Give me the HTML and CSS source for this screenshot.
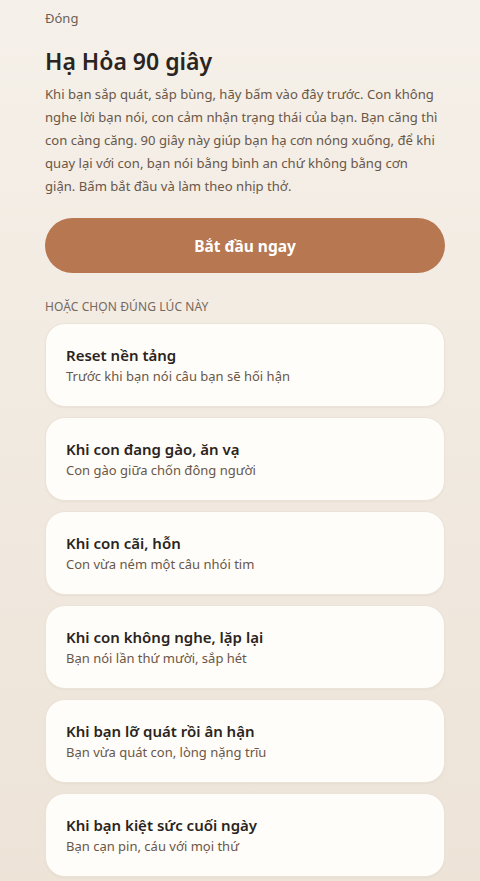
FILE: index.html
```html
<!DOCTYPE html>
<html lang="vi">
<head>
<meta charset="utf-8">
<title>Hạ Hỏa 90 giây</title>
<link rel="stylesheet" href="styles.css">
</head>
<body>
<main class="page">
  <a class="close" href="#">Đóng</a>
  <h1 class="title">Hạ Hỏa 90 giây</h1>
  <p class="intro">Khi bạn sắp quát, sắp bùng, hãy bấm vào đây trước. Con không nghe lời bạn nói, con cảm nhận trạng thái của bạn. Bạn căng thì con càng căng. 90 giây này giúp bạn hạ cơn nóng xuống, để khi quay lại với con, bạn nói bằng bình an chứ không bằng cơn giận. Bấm bắt đầu và làm theo nhịp thở.</p>
  <button class="start">Bắt đầu ngay</button>
  <h2 class="section">Hoặc chọn đúng lúc này</h2>
  <ul class="list">
    <li class="card"><div class="card-title">Reset nền tảng</div><div class="card-sub">Trước khi bạn nói câu bạn sẽ hối hận</div></li>
    <li class="card"><div class="card-title">Khi con đang gào, ăn vạ</div><div class="card-sub">Con gào giữa chốn đông người</div></li>
    <li class="card"><div class="card-title">Khi con cãi, hỗn</div><div class="card-sub">Con vừa ném một câu nhói tim</div></li>
    <li class="card"><div class="card-title">Khi con không nghe, lặp lại</div><div class="card-sub">Bạn nói lần thứ mười, sắp hét</div></li>
    <li class="card"><div class="card-title">Khi bạn lỡ quát rồi ân hận</div><div class="card-sub">Bạn vừa quát con, lòng nặng trĩu</div></li>
    <li class="card"><div class="card-title">Khi bạn kiệt sức cuối ngày</div><div class="card-sub">Bạn cạn pin, cáu với mọi thứ</div></li>
  </ul>
</main>
</body>
</html>
```
FILE: styles.css
```css
html, body {
  margin: 0;
  padding: 0;
}
body {
  min-height: 100vh;
  background: linear-gradient(180deg, #f5f0e9 0%, #ede3d7 100%);
  font-family: "Noto Sans", "Open Sans", sans-serif;
  color: #2b2520;
}
.page {
  padding: 8px 35px 40px 45px;
  display: flex;
  flex-direction: column;
}
.close {
  font-size: 13px;
  line-height: 20px;
  color: #6b5f56;
  text-decoration: none;
  align-self: flex-start;
}
.title {
  margin: 18px 0 0;
  font-size: 23px;
  line-height: 30px;
  font-weight: 600;
  color: #2a2420;
}
.intro {
  margin: 7px 0 0;
  max-width: 393px;
  font-size: 13.1px;
  line-height: 23px;
  color: #6a5748;
}
.start {
  margin-top: 20px;
  height: 55px;
  border: none;
  border-radius: 28px;
  background: #b77750;
  color: #fff;
  font-family: inherit;
  font-size: 15.5px;
  font-weight: 700;
}
.section {
  margin: 24px 0 0;
  font-size: 12px;
  line-height: 20px;
  font-weight: 400;
  text-transform: uppercase;
  color: #76685c;
  letter-spacing: 0.1px;
}
.list {
  list-style: none;
  margin: 6px 0 0;
  padding: 0;
  display: flex;
  flex-direction: column;
  gap: 10px;
}
.card {
  height: 84px;
  box-sizing: border-box;
  padding: 20px;
  background: #fffdf9;
  border: 1px solid #ebe3d8;
  border-radius: 20px;
  box-shadow: 0 1px 2px rgba(120, 90, 60, 0.06);
  display: flex;
  flex-direction: column;
  justify-content: center;
}
.card-title {
  font-size: 15px;
  line-height: 22px;
  font-weight: 600;
  color: #2a2420;
}
.card-sub {
  font-size: 13px;
  line-height: 20px;
  color: #6a5748;
}
```
